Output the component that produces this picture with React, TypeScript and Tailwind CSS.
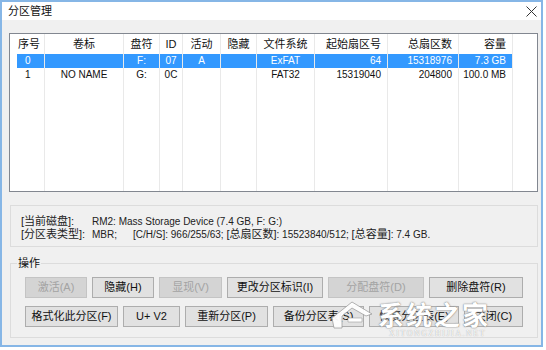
import React from "react";

const cols = [
  { w: 28, h: "序号", align: "left", hpl: 0 },
  { w: 79, h: "卷标", align: "center" },
  { w: 36, h: "盘符", align: "center" },
  { w: 23, h: "ID", align: "center" },
  { w: 38, h: "活动", align: "center" },
  { w: 36, h: "隐藏", align: "center" },
  { w: 58, h: "文件系统", align: "center" },
  { w: 73, h: "起始扇区号", align: "right" },
  { w: 71, h: "总扇区数", align: "right" },
  { w: 54, h: "容量", align: "right" },
];

const rows = [
  ["0", "", "F:", "07", "A", "", "ExFAT", "64", "15318976", "7.3 GB"],
  ["1", "NO NAME", "G:", "0C", "", "", "FAT32", "15319040", "204800", "100.0 MB"],
];

function alignCls(a: string) {
  if (a === "right") return "justify-end pr-[6px]";
  if (a === "left") return "justify-start pl-[1px]";
  return "justify-center";
}

function Btn({ label, w, disabled }: { label: string; w: number; disabled?: boolean }) {
  return (
    <div
      style={{ width: w }}
      className={
        "h-[21px] flex items-center justify-center text-[11px] border " +
        (disabled
          ? "bg-[#d4d4d4] border-[#c4c4c4] text-[#a3a3a3]"
          : "bg-[#e1e1e1] border-[#adadad] text-[#111]")
      }
    >
      {label}
    </div>
  );
}

export default function App() {
  return (
    <div className="w-[546px] h-[350px] bg-white relative overflow-hidden font-['Liberation_Sans','Noto_Sans_CJK_SC',sans-serif] text-[#111]">
      <div className="w-[543px] h-[347px] border-2 border-[#86b6e6] flex flex-col bg-[#f0f0f0]">
        {/* title bar */}
        <div className="h-[18px] bg-white flex items-center justify-between pl-[6px] pr-[3px] shrink-0">
          <span className="text-[11px] leading-none">分区管理</span>
          <svg width="11" height="11" viewBox="0 0 11 11" className="mr-[1px]">
            <path d="M0.5 0.5 L10.5 10.5 M10.5 0.5 L0.5 10.5" stroke="#333" strokeWidth="1" />
          </svg>
        </div>
        {/* body */}
        <div className="flex-1 flex flex-col pl-[7px] pr-[3px] pt-[13px]">
          {/* list view */}
          <div className="h-[159px] border border-[#828790] bg-white pl-[7px] flex shrink-0 overflow-hidden">
            {cols.map((c, ci) => (
              <div
                key={ci}
                style={{ width: c.w }}
                className="flex flex-col border-r border-[#e9e9e9] shrink-0"
              >
                <div className={"h-[20px] flex items-center text-[11px] " + alignCls(c.align)}>
                  {c.h}
                </div>
                {rows.map((r, ri) => (
                  <div
                    key={ri}
                    className={
                      "h-[14px] flex items-center text-[10px] leading-none whitespace-nowrap " +
                      (ci === 0 ? "justify-start pl-[8px]" : alignCls(c.align)) +
                      (ri === 0 ? " bg-[#3399ff] text-white" : "")
                    }
                  >
                    {r[ci]}
                  </div>
                ))}
              </div>
            ))}
          </div>

          {/* info group */}
          <div className="mt-[13px] ml-[1px] h-[42px] border border-[#dcdcdc] pl-[10px] pt-[9px] shrink-0 text-[#222]">
            <div className="h-[13px] flex items-center whitespace-nowrap">
              <span className="w-[71px] text-[11px]">[当前磁盘]:</span>
              <span className="text-[10px]">RM2: Mass Storage Device (7.4 GB, F: G:)</span>
            </div>
            <div className="h-[13px] flex items-center whitespace-nowrap">
              <span className="w-[71px] text-[11px]">[分区表类型]:</span>
              <span className="w-[41px] text-[10px]">MBR;</span>
              <span className="text-[10px]">[C/H/S]: 966/255/63;&nbsp;</span>
              <span className="text-[11px]">[总扇区数]</span>
              <span className="text-[10px]">: 15523840/512;&nbsp;</span>
              <span className="text-[11px]">[总容量]</span>
              <span className="text-[10px]">: 7.4 GB.</span>
            </div>
          </div>

          {/* operations group */}
          <div className="mt-[16px] ml-[1px] h-[75px] border border-[#dcdcdc] relative pl-[14px] pt-[13px] flex flex-col gap-[8px] shrink-0">
            <span className="absolute left-[6px] top-[-8px] px-[1px] bg-[#f0f0f0] text-[11px] leading-[14px]">
              操作
            </span>
            <div className="flex gap-[5px]">
              <Btn label="激活(A)" w={62} disabled />
              <Btn label="隐藏(H)" w={62} />
              <Btn label="显现(V)" w={63} disabled />
              <Btn label="更改分区标识(I)" w={96} />
              <Btn label="分配盘符(D)" w={96} disabled />
              <Btn label="删除盘符(R)" w={94} />
            </div>
            <div className="flex gap-[5px]">
              <Btn label="格式化此分区(F)" w={93} />
              <Btn label="U+ V2" w={57} />
              <Btn label="重新分区(P)" w={83} />
              <Btn label="备份分区表(S)" w={91} />
              <Btn label="恢复分区表(E)" w={90} />
              <Btn label="关闭(C)" w={59} />
            </div>
          </div>
        </div>
      </div>

      {/* watermark overlay */}
      <div className="absolute left-[328px] top-[296px] flex items-end pointer-events-none">
        <svg width="48" height="36" viewBox="0 0 48 36" className="mb-[6px]">
          <path
            d="M4 22 L24 6 L44 18 L38 20 L24 12 L14 20 L14 32 L6 32 Z"
            fill="#ffffff"
            stroke="#9a9a9a"
            strokeWidth="0.8"
            opacity="0.95"
          />
          <path d="M20 22 L34 22 L34 26 L20 26 Z" fill="#ffffff" stroke="#9a9a9a" strokeWidth="0.6" />
        </svg>
      </div>
      <div className="absolute left-[378px] top-[300px] pointer-events-none flex flex-col items-end">
        <span className="text-[26px] leading-[28px] font-bold text-white font-['Noto_Sans_CJK_SC',sans-serif] [text-shadow:0_0_1px_#777,0_0_2px_#999] tracking-[2px]">
          系统之家
        </span>
        <span className="text-[8px] leading-[10px] tracking-[1.5px] text-white [text-shadow:0_0_1px_#888] font-['Liberation_Serif',serif] mr-[4px] mt-[1px]">
          XITONGZHIJIA.NET
        </span>
      </div>
    </div>
  );
}
